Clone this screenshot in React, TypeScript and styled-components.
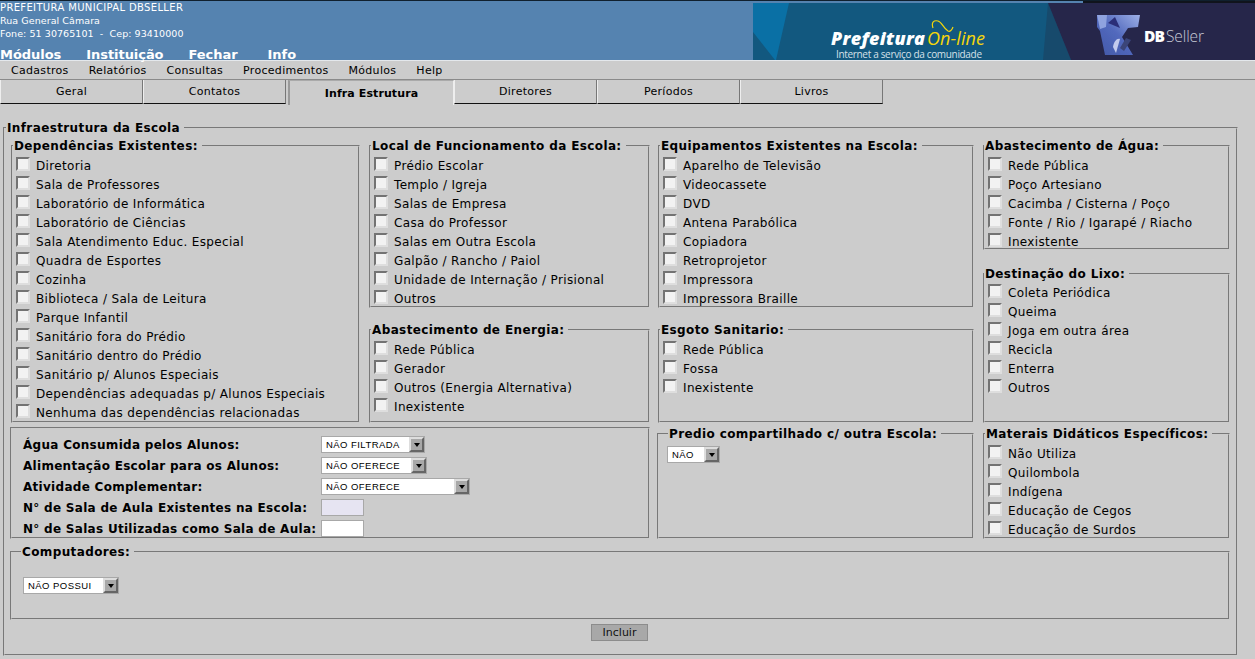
import { FC, ReactNode } from "react";
import styled, { createGlobalStyle } from "styled-components";

const GlobalStyle = createGlobalStyle`
  html, body {
    margin: 0;
    background: #cccccc;
    color: #000;
    font-family: "DejaVu Sans", Verdana, sans-serif;
    overflow: hidden;
  }
  * { box-sizing: border-box; }
`;

const Page = styled.div`
  width: 1255px;
  height: 659px;
  background: #cccccc;
`;

const Header = styled.header`
  height: 61px;
  background: #5583b0;
  border-top: 1px solid #10202e;
  display: flex;
  justify-content: space-between;
  border-bottom: 1px solid #e4e8ec;
`;

const HeaderInfo = styled.div`
  color: #fff;
`;

const InfoTitle = styled.div`
  font-size: 10px;
  line-height: 13px;
  letter-spacing: 0.35px;
  white-space: pre;
`;

const InfoLine = styled.div`
  font-size: 9.5px;
  line-height: 13px;
  letter-spacing: 0.07px;
  white-space: pre;
`;

const MainMenu = styled.nav`
  display: flex;
  gap: 25px;
  margin-top: 8px;
  font-size: 13px;
  line-height: 14px;
  font-weight: bold;
  letter-spacing: -0.05px;
  span:last-child {
    margin-left: 5px;
  }
`;

const Banner = styled.svg`
  display: block;
  flex: none;
`;

const SubMenu = styled.nav`
  height: 18px;
  display: flex;
  gap: 20px;
  padding-left: 11px;
  font-size: 11px;
  line-height: 20px;
  letter-spacing: 0.3px;
`;

const Tabs = styled.div`
  height: 25px;
  display: flex;
  border-top: 1px solid #8a8a8a;
`;

const Tab = styled.div<{ $w: number }>`
  width: ${(p) => p.$w}px;
  height: 24px;
  text-align: center;
  font-size: 11px;
  line-height: 24px;
  letter-spacing: 0.3px;
  border-bottom: 1px solid #111;
  border-right: 1px solid #777;
  border-left: 1px solid #eee;
`;

const ActiveTab = styled.div`
  width: 166px;
  height: 25px;
  margin-left: 2px;
  text-align: center;
  font-size: 11px;
  line-height: 26px;
  font-weight: bold;
  letter-spacing: 0.1px;
  border-left: 2px solid #999;
  border-right: 1px solid #eee;
  border-top: 1px solid #aaa;
`;

const Outer = styled.fieldset`
  margin: 16px 0 0 3px;
  padding: 0 6px;
  width: 1235px;
  height: 536px;
  border: 2px groove #ccc;
  min-width: 0;
`;

const Legend = styled.legend<{ $ml: number }>`
  padding: 0 4px 0 1px;
  margin-left: ${(p) => p.$ml}px;
  font-size: 12px;
  line-height: 16px;
  font-weight: bold;
  letter-spacing: 0.38px;
  white-space: nowrap;
`;

const TopRow = styled.div`
  display: grid;
  grid-template-columns: 358px 289px 325px 248px;
  margin-top: 2px;
`;

const Stack = styled.div<{ $gap: number }>`
  display: flex;
  flex-direction: column;
  gap: ${(p) => p.$gap}px;
`;

const Box = styled.fieldset<{ $w: number; $h: number; $pt: number }>`
  margin: 0;
  padding: ${(p) => p.$pt}px 3px 0;
  min-width: 0;
  width: ${(p) => p.$w}px;
  height: ${(p) => p.$h}px;
  border: 2px groove #ccc;
`;

const MiddleRow = styled.div`
  display: grid;
  grid-template-columns: 647px 326px 248px;
  align-items: end;
  margin: 3px 0 0 -1px;
`;

const Check = styled.label`
  height: 19px;
  display: flex;
  align-items: center;
  gap: 6px;
  font-size: 12px;
  white-space: nowrap;
  letter-spacing: 0.35px;
`;

const CheckInput = styled.input.attrs({ type: "checkbox" })`
  appearance: none;
  width: 14px;
  height: 14px;
  margin: -3px 0 0;
  background: #f2f2f2;
  border: 2px solid;
  border-color: #737373 #dedede #dedede #737373;
`;

const Form = styled.div`
  display: grid;
  grid-template-columns: 298px auto;
  grid-auto-rows: 21px;
  justify-items: start;
  align-items: center;
  padding: 3px 0 0 8px;
`;

const FormLabel = styled.label`
  font-size: 12px;
  font-weight: bold;
  letter-spacing: 0.29px;
  white-space: nowrap;
`;

const Select = styled.div<{ $w: number }>`
  width: ${(p) => p.$w}px;
  height: 17px;
  display: flex;
  align-items: center;
  justify-content: space-between;
  background: #fff;
  border: 1px solid #a8a8a8;
  padding-left: 4px;
  font-family: "Liberation Sans", Arial, sans-serif;
  font-size: 9.5px;
  letter-spacing: 0.45px;
`;

const SelectArrow = styled.span`
  width: 15px;
  height: 15px;
  flex: none;
  display: flex;
  align-items: center;
  justify-content: center;
  background: #a8a8a8;
  border: 2px solid;
  border-color: #ddd #666 #666 #ddd;
  &::after {
    content: "";
    border-style: solid;
    border-width: 4px 3.5px 0;
    border-color: #000 transparent transparent;
  }
`;

const TextBox = styled.input<{ $bg: string }>`
  width: 43px;
  height: 17px;
  padding: 0;
  background: ${(p) => p.$bg};
  border: 1px solid #a8a8a8;
`;

const SelectWrap = styled.div<{ $pad: string }>`
  padding: ${(p) => p.$pad};
`;

const Bottom = styled.div`
  margin: 5px 0 0 -1px;
`;

const Actions = styled.div`
  display: flex;
  margin-top: 4px;
  padding-left: 580px;
`;

const SubmitButton = styled.button`
  width: 57px;
  height: 17px;
  padding: 0;
  background: #a8a8a8;
  border: 1px solid #8c8c8c;
  font-family: inherit;
  font-size: 11px;
  color: #111;
`;

const Group: FC<{
  title?: string;
  w: number;
  h: number;
  pt?: number;
  legendOffset?: number;
  items?: string[];
  children?: ReactNode;
}> = ({ title, w, h, pt = 2, legendOffset = -3, items = [], children }) => (
  <Box $w={w} $h={h} $pt={pt}>
    {title && <Legend $ml={legendOffset}>{title}</Legend>}
    {items.map((item) => (
      <Check key={item}>
        <CheckInput />
        {item}
      </Check>
    ))}
    {children}
  </Box>
);

const Dropdown: FC<{ w: number; value: string }> = ({ w, value }) => (
  <Select $w={w}>
    {value}
    <SelectArrow />
  </Select>
);

const tabsBefore = [
  { name: "Geral", w: 143 },
  { name: "Contatos", w: 143 },
];
const tabsAfter = [
  { name: "Diretores", w: 143 },
  { name: "Períodos", w: 143 },
  { name: "Livros", w: 143 },
];

const BannerArt = () => (
  <Banner width="502" height="59" viewBox="0 0 502 59">
    <defs>
      <linearGradient id="cube" x1="1" y1="0" x2="0" y2="1">
        <stop offset="0" stopColor="#9db0e6" />
        <stop offset="0.5" stopColor="#5269bd" />
        <stop offset="1" stopColor="#4258a8" />
      </linearGradient>
      <filter id="soft">
        <feGaussianBlur stdDeviation="0.6" />
      </filter>
    </defs>
    <rect x="0" y="2" width="502" height="57" fill="#12587f" />
    <path d="M0 2H36L23 59H22L0 31Z" fill="#0a70a5" />
    <path d="M295 2L318 59H290Z" fill="#174a6c" />
    <path d="M295 2H502V59H318Z" fill="#26264a" />
    <rect x="330" y="0" width="172" height="2" fill="#10141c" />
    <g filter="url(#soft)">
      <path d="M344 14H387L385 26L375 27L369 36L380 54H352L347 30L344 26Z" fill="url(#cube)" />
      <path d="M344 14H354L353 26L347 28Z" fill="#8fa3df" />
      <path d="M355 22L362 16L367 27Z" fill="#2a2f78" />
      <path d="M373 37L367 47L371 50L378 39Z" fill="#3a4478" />
      <path d="M360 46C361 40 364 37 367 38L363 52Z" fill="#c3cbee" />
    </g>
    <text x="78" y="44" fontFamily="Open Sans, sans-serif" fontSize="18" fontWeight="800" fontStyle="italic" fill="#fff" textLength="94">
      Prefeitura
    </text>
    <text x="174" y="44" fontFamily="Open Sans, sans-serif" fontSize="18" fontStyle="italic" fill="#f5d60a" textLength="58">
      On-line
    </text>
    <path d="M180 27C178 21 181 19 185 20C189 21 190 27 195 30C197 31 199 29 200 26" fill="none" stroke="#f5d60a" strokeWidth="1.2" />
    <text x="83" y="57" fontFamily="Open Sans, sans-serif" fontSize="10" fill="#d5e0e8" textLength="146">
      Internet a serviço da comunidade
    </text>
    <text x="391" y="41" fontFamily="Open Sans, sans-serif" fontSize="15.5" fontWeight="800" fill="#fff" textLength="21">
      DB
    </text>
    <text x="413" y="41" fontFamily="Open Sans, sans-serif" fontSize="15.5" fontWeight="300" fill="#c9cbd8" textLength="38">
      Seller
    </text>
  </Banner>
);

const App = () => (
  <Page>
    <GlobalStyle />
    <Header>
      <HeaderInfo>
        <InfoTitle>PREFEITURA MUNICIPAL DBSELLER</InfoTitle>
        <InfoLine>Rua General Câmara</InfoLine>
        <InfoLine>{"Fone: 51 30765101  -  Cep: 93410000"}</InfoLine>
        <MainMenu>
          <span>Módulos</span>
          <span>Instituição</span>
          <span>Fechar</span>
          <span>Info</span>
        </MainMenu>
      </HeaderInfo>
      <BannerArt />
    </Header>
    <SubMenu>
      <span>Cadastros</span>
      <span>Relatórios</span>
      <span>Consultas</span>
      <span>Procedimentos</span>
      <span>Módulos</span>
      <span>Help</span>
    </SubMenu>
    <Tabs>
      {tabsBefore.map((t) => (
        <Tab key={t.name} $w={t.w}>{t.name}</Tab>
      ))}
      <ActiveTab>Infra Estrutura</ActiveTab>
      {tabsAfter.map((t) => (
        <Tab key={t.name} $w={t.w}>{t.name}</Tab>
      ))}
    </Tabs>
    <Outer>
      <Legend $ml={-5}>Infraestrutura da Escola</Legend>
      <TopRow>
        <Group
          title="Dependências Existentes:"
          w={349}
          h={285}
          items={[
            "Diretoria",
            "Sala de Professores",
            "Laboratório de Informática",
            "Laboratório de Ciências",
            "Sala Atendimento Educ. Especial",
            "Quadra de Esportes",
            "Cozinha",
            "Biblioteca / Sala de Leitura",
            "Parque Infantil",
            "Sanitário fora do Prédio",
            "Sanitário dentro do Prédio",
            "Sanitário p/ Alunos Especiais",
            "Dependências adequadas p/ Alunos Especiais",
            "Nenhuma das dependências relacionadas",
          ]}
        />
        <Stack $gap={14}>
          <Group
            title="Local de Funcionamento da Escola:"
            w={281}
            h={170}
            items={[
              "Prédio Escolar",
              "Templo / Igreja",
              "Salas de Empresa",
              "Casa do Professor",
              "Salas em Outra Escola",
              "Galpão / Rancho / Paiol",
              "Unidade de Internação / Prisional",
              "Outros",
            ]}
          />
          <Group
            title="Abastecimento de Energia:"
            w={281}
            h={101}
            items={["Rede Pública", "Gerador", "Outros (Energia Alternativa)", "Inexistente"]}
          />
        </Stack>
        <Stack $gap={14}>
          <Group
            title="Equipamentos Existentes na Escola:"
            w={316}
            h={170}
            items={[
              "Aparelho de Televisão",
              "Videocassete",
              "DVD",
              "Antena Parabólica",
              "Copiadora",
              "Retroprojetor",
              "Impressora",
              "Impressora Braille",
            ]}
          />
          <Group title="Esgoto Sanitario:" w={316} h={101} items={["Rede Pública", "Fossa", "Inexistente"]} />
        </Stack>
        <Stack $gap={16}>
          <Group
            title="Abastecimento de Água:"
            w={247}
            h={112}
            legendOffset={-4}
            items={[
              "Rede Pública",
              "Poço Artesiano",
              "Cacimba / Cisterna / Poço",
              "Fonte / Rio / Igarapé / Riacho",
              "Inexistente",
            ]}
          />
          <Group
            title="Destinação do Lixo:"
            w={247}
            h={157}
            pt={1}
            legendOffset={-4}
            items={["Coleta Periódica", "Queima", "Joga em outra área", "Recicla", "Enterra", "Outros"]}
          />
        </Stack>
      </TopRow>
      <MiddleRow>
        <Group w={640} h={112}>
          <Form>
            <FormLabel>Água Consumida pelos Alunos:</FormLabel>
            <Dropdown w={104} value="NÃO FILTRADA" />
            <FormLabel>Alimentação Escolar para os Alunos:</FormLabel>
            <Dropdown w={106} value="NÃO OFERECE" />
            <FormLabel>Atividade Complementar:</FormLabel>
            <Dropdown w={149} value="NÃO OFERECE" />
            <FormLabel>N° de Sala de Aula Existentes na Escola:</FormLabel>
            <TextBox $bg="#e6e4f2" />
            <FormLabel>N° de Salas Utilizadas como Sala de Aula:</FormLabel>
            <TextBox $bg="#ffffff" />
          </Form>
        </Group>
        <Group title="Predio compartilhado c/ outra Escola:" w={317} h={113} legendOffset={6}>
          <SelectWrap $pad="2px 0 0 5px">
            <Dropdown w={53} value="NÃO" />
          </SelectWrap>
        </Group>
        <Group
          title="Materais Didáticos Específicos:"
          w={247}
          h={113}
          items={["Não Utiliza", "Quilombola", "Indígena", "Educação de Cegos", "Educação de Surdos"]}
        />
      </MiddleRow>
      <Bottom>
        <Group title="Computadores:" w={1220} h={76} legendOffset={6}>
          <SelectWrap $pad="15px 0 0 8px">
            <Dropdown w={96} value="NÃO POSSUI" />
          </SelectWrap>
        </Group>
      </Bottom>
      <Actions>
        <SubmitButton>Incluir</SubmitButton>
      </Actions>
    </Outer>
  </Page>
);

export default App;
